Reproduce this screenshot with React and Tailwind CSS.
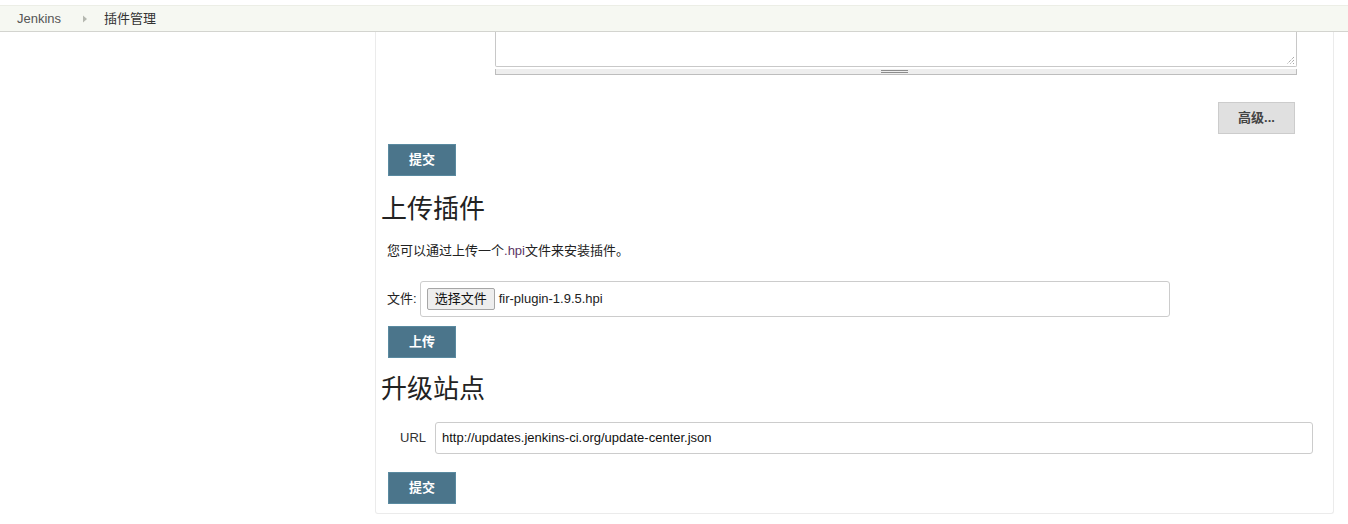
import React from 'react';

const font = { fontFamily: '"Liberation Sans", Arial, "Noto Sans CJK SC", sans-serif' };

const BlueButton = ({ label, className = '' }) => (
  <button
    className={`w-[68px] h-[32px] bg-[#4b758b] border border-[#5a8aa0] text-white text-[13px] font-bold ${className}`}
  >
    {label}
  </button>
);

const Heading = ({ children, className = '' }) => (
  <h1
    className={`text-[26px] leading-[32px] text-[#222] ${className}`}
    style={{ fontFamily: '"Liberation Serif", "Noto Sans CJK SC", serif' }}
  >
    {children}
  </h1>
);

export default function App() {
  return (
    <div className="bg-white min-h-[524px] text-[#333]" style={font}>
      <div className="h-[5px]" />
      <div className="h-[27px] bg-[#f6f8f2] border-t border-[#eceee6] border-b border-b-[#d3d4cf] flex items-center text-[13px]">
        <span className="ml-[17px] text-[#555]">Jenkins</span>
        <svg width="6" height="8" viewBox="0 0 6 8" className="ml-[21px]">
          <path d="M1 0.5 L5 4 L1 7.5 Z" fill="#b5b8b0" />
        </svg>
        <span className="ml-[16px] text-[#333]">插件管理</span>
      </div>

      <div className="flex">
        <div className="w-[375px] shrink-0" />
        <div className="flex-1 mr-[14px] border-x border-b border-[#ebebeb] rounded-b-[3px] pb-[9px]">
          <div className="pl-[119px] pr-[36px]">
            <div className="relative h-[35px] border-x border-b border-[#c8c8c8] rounded-b-[2px] bg-white">
              <svg width="10" height="10" viewBox="0 0 10 10" className="absolute right-[1px] bottom-[1px]">
                <path d="M9 2 L2 9 M9 5 L5 9 M9 8 L8 9" stroke="#888" strokeWidth="1" strokeDasharray="1 1" />
              </svg>
            </div>
            <div className="mt-[2px] h-[6px] bg-[#eeeeee] border-x border-b border-[#bdbdbd] flex justify-center">
              <div className="mt-[1px] w-[27px] h-[3px] border-y border-[#8c8c8c] ml-[-3px]" />
            </div>
          </div>

          <div className="flex justify-end pr-[38px] mt-[27px]">
            <button className="w-[77px] h-[32px] bg-[#e0e0e0] border border-[#cccccc] text-[13px] font-bold text-[#444]">
              高级...
            </button>
          </div>

          <div className="pl-[12px] mt-[10px]">
            <BlueButton label="提交" />
          </div>

          <Heading className="pl-[5px] mt-[18px]">上传插件</Heading>

          <p className="pl-[11px] mt-[16px] text-[13px] leading-[18px] text-[#222]">
            您可以通过上传一个<span className="text-[#5c3566]">.hpi</span>文件来安装插件。
          </p>

          <div className="pl-[11px] mt-[21px] flex items-center">
            <span className="text-[13px] text-[#222]">文件:</span>
            <div className="ml-[3px] w-[750px] h-[36px] border border-[#cccccc] rounded-[3px] flex items-center pl-[6px]">
              <span className="h-[22px] px-[7px] bg-[#eeeeee] border border-[#a6a6a6] rounded-[2px] text-[13px] leading-[20px] text-[#111]">
                选择文件
              </span>
              <span className="ml-[4px] text-[13px] text-[#222]">fir-plugin-1.9.5.hpi</span>
            </div>
          </div>

          <div className="pl-[12px] mt-[9px]">
            <BlueButton label="上传" />
          </div>

          <Heading className="pl-[5px] mt-[16px]">升级站点</Heading>

          <div className="flex items-center mt-[16px] pr-[20px]">
            <span className="ml-[24px] w-[35px] text-[13px] text-[#333]">URL</span>
            <div className="flex-1 h-[32px] border border-[#cccccc] rounded-[3px] flex items-center pl-[6px] text-[13px] text-[#111]">
              http://updates.jenkins-ci.org/update-center.json
            </div>
          </div>

          <div className="pl-[12px] mt-[18px]">
            <BlueButton label="提交" />
          </div>
        </div>
      </div>
    </div>
  );
}
